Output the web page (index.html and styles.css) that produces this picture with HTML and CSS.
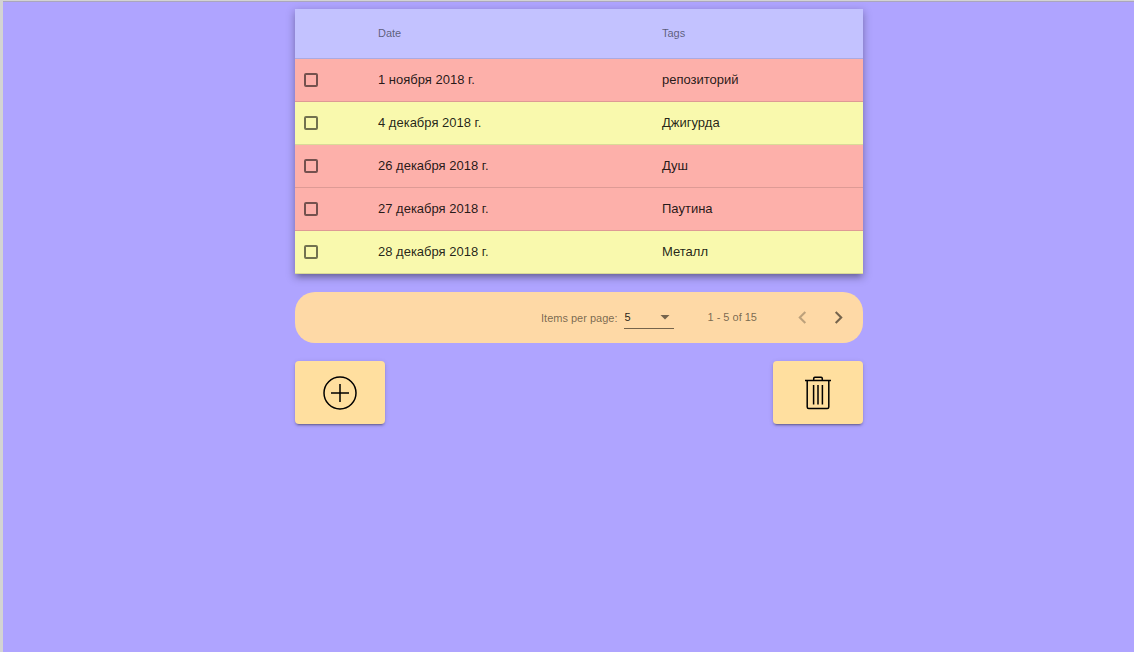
FILE: index.html
```html
<!DOCTYPE html>
<html lang="ru">
<head>
<meta charset="utf-8">
<title>Notes</title>
<link rel="stylesheet" href="styles.css">
</head>
<body>
<main class="page">
  <div class="content">
    <table class="notes">
      <colgroup><col class="col-check"><col class="col-date"><col></colgroup>
      <thead>
        <tr><td></td><th scope="col">Date</th><th scope="col">Tags</th></tr>
      </thead>
      <tbody>
        <tr class="row-red"><td class="check"><input type="checkbox" aria-labelledby="d1"></td><td id="d1">1 ноября 2018 г.</td><td>репозиторий</td></tr>
        <tr class="row-yellow"><td class="check"><input type="checkbox" aria-labelledby="d2"></td><td id="d2">4 декабря 2018 г.</td><td>Джигурда</td></tr>
        <tr class="row-red"><td class="check"><input type="checkbox" aria-labelledby="d3"></td><td id="d3">26 декабря 2018 г.</td><td>Душ</td></tr>
        <tr class="row-red"><td class="check"><input type="checkbox" aria-labelledby="d4"></td><td id="d4">27 декабря 2018 г.</td><td>Паутина</td></tr>
        <tr class="row-yellow"><td class="check"><input type="checkbox" aria-labelledby="d5"></td><td id="d5">28 декабря 2018 г.</td><td>Металл</td></tr>
      </tbody>
    </table>

    <div class="paginator">
      <label class="size-label" for="size">Items per page:</label>
      <div class="size-field">
        <select id="size" class="size-select"><option>5</option><option>10</option><option>15</option></select>
        <svg class="size-arrow" viewBox="0 0 10 5" aria-hidden="true"><path d="M0.500 0h9L5 4.500z"/></svg>
      </div>
      <span class="range">1 - 5 of 15</span>
      <button class="nav" type="button" aria-label="Previous page" disabled><svg viewBox="0 0 24 24"><path d="M15.41 7.41 14 6l-6 6 6 6 1.41-1.41L10.83 12z"/></svg></button>
      <button class="nav" type="button" aria-label="Next page"><svg viewBox="0 0 24 24"><path d="M10 6 8.59 7.41 13.17 12l-4.58 4.59L10 18l6-6z"/></svg></button>
    </div>

    <div class="actions">
      <button class="action" type="button" aria-label="Add">
        <svg viewBox="0 0 34 34"><circle cx="17" cy="17" r="16"/><path d="M17 8v18M8 17h18"/></svg>
      </button>
      <button class="action" type="button" aria-label="Delete">
        <svg viewBox="0 0 34 34"><path d="M4 4.500h26M6.200 4.500V31a1.500 1.500 0 0 0 1.500 1.500h18.600a1.500 1.500 0 0 0 1.500-1.500V4.500M12.700 4.500V2.500a1.200 1.200 0 0 1 1.200-1.200h6.200a1.200 1.200 0 0 1 1.200 1.200v2M12.600 9v19.500M17 9v19.500M21.400 9v19.500"/></svg>
      </button>
    </div>
  </div>
</main>
</body>
</html>
```
FILE: styles.css
```css
* { box-sizing: border-box; }

body {
  margin: 0;
  background: #d3d3d3;
  color: rgba(0, 0, 0, 0.87);
  font-family: "Liberation Sans", Arial, sans-serif;
  font-size: 13px;
}

.page {
  min-height: 100vh;
  border-top: 1px solid #d3d3d3;
  border-left: 3px solid #d3d3d3;
  padding: 8px 0 18px 21px;
  background: #afa4ff;
  box-shadow: inset 0 1px #aaa6bd;
}

.content {
  display: flex;
  flex-direction: column;
  gap: 18px;
  max-width: 568px;
  margin: 0 auto;
}

.notes {
  width: 100%;
  table-layout: fixed;
  border-collapse: separate;
  border-spacing: 0;
  background: #c3c2ff;
  box-shadow: 0 5px 5px -3px rgba(0, 0, 0, 0.2), 0 3px 8px 1px rgba(0, 0, 0, 0.26);
}

.col-check { width: 83px; }
.col-date { width: 50%; }

.notes th,
.notes td {
  height: 43px;
  padding: 0 0 2px;
  border-bottom: 1px solid rgba(0, 0, 0, 0.12);
  text-align: left;
  vertical-align: middle;
}

.notes thead th,
.notes thead td {
  height: 50px;
  color: rgba(0, 0, 0, 0.54);
  font-size: 11px;
  font-weight: 400;
}

.row-red { background: #fdb0aa; }
.row-yellow { background: #f9f9ad; }

.notes .check { padding: 0 0 0 9px; }

.check input {
  display: block;
  appearance: none;
  width: 14px;
  height: 14px;
  margin: 0;
  border: 2px solid rgba(0, 0, 0, 0.54);
  border-radius: 2px;
}

.check input:checked { background: rgba(0, 0, 0, 0.54); }

.paginator {
  display: flex;
  align-items: center;
  justify-content: flex-end;
  height: 51px;
  padding-right: 7px;
  border-radius: 20px;
  background: #fed9a6;
  color: rgba(0, 0, 0, 0.54);
  font-size: 11px;
}

.size-label { padding-top: 1px; }

.size-field {
  position: relative;
  width: 50px;
  margin: 0 33px 0 7px;
  border-bottom: 1px solid rgba(0, 0, 0, 0.54);
}

.size-select {
  display: block;
  appearance: none;
  width: 100%;
  height: 21px;
  padding: 0;
  border: 0;
  background: transparent;
  color: rgba(0, 0, 0, 0.87);
  font: inherit;
}

.size-arrow {
  position: absolute;
  top: 8px;
  right: 4px;
  width: 10px;
  height: 5px;
  fill: rgba(0, 0, 0, 0.54);
  pointer-events: none;
}

.range {
  margin-right: 27px;
  padding-bottom: 1px;
}

.nav {
  display: grid;
  place-items: center;
  width: 36px;
  height: 36px;
  padding: 0;
  border: 0;
  background: transparent;
  fill: rgba(0, 0, 0, 0.54);
}

.nav:disabled { fill: rgba(0, 0, 0, 0.26); }

.nav path {
  stroke: inherit;
  stroke-width: 1;
}

.nav svg {
  width: 25px;
  height: 25px;
}

.actions {
  display: flex;
  justify-content: space-between;
}

.action {
  display: grid;
  place-items: center;
  width: 90px;
  height: 63px;
  padding: 0;
  border: 0;
  border-radius: 4px;
  background: #ffdf9f;
  box-shadow: 0 3px 1px -2px rgba(0, 0, 0, 0.2), 0 2px 2px rgba(0, 0, 0, 0.14), 0 1px 5px rgba(0, 0, 0, 0.12);
}

.action svg {
  width: 34px;
  height: 34px;
  fill: none;
  stroke: #000;
  stroke-width: 1.5;
}
```
